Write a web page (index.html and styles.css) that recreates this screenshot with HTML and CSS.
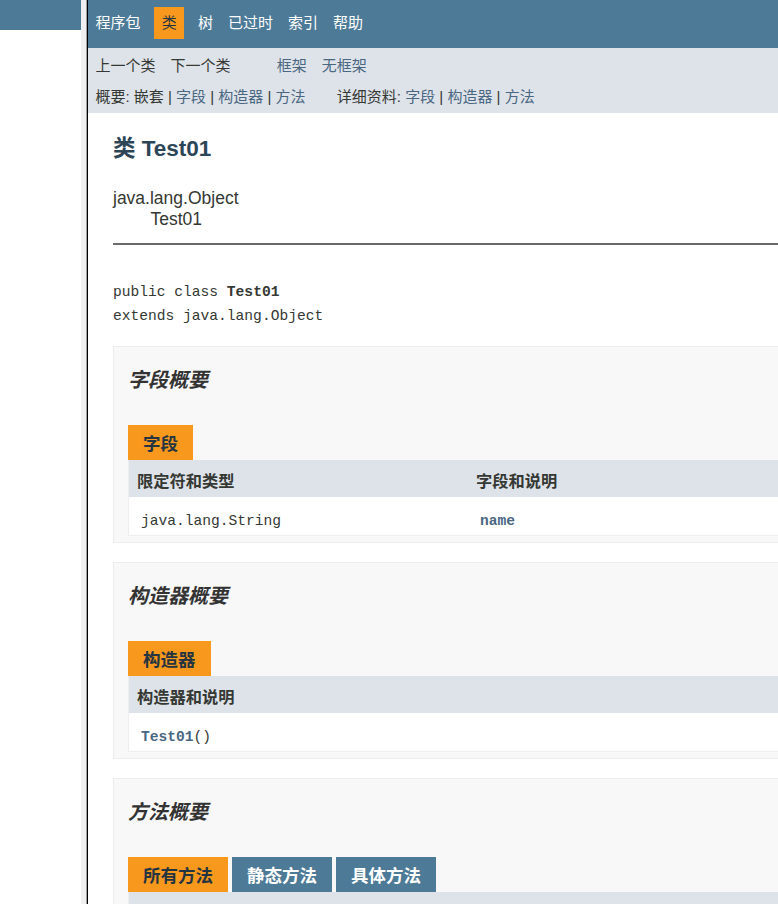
FILE: index.html
```html
<!DOCTYPE html>
<html lang="zh-CN">
<head>
<meta charset="utf-8">
<title>Test01</title>
<link rel="stylesheet" href="styles.css">
</head>
<body>
<div class="frameset">
  <div class="left-frame"><div class="left-bar"></div></div>
  <div class="frame-border"></div>
  <div class="main-frame">
    <nav class="top-nav">
      <ul class="nav-list">
        <li>程序包</li>
        <li class="active">类</li>
        <li>树</li>
        <li>已过时</li>
        <li>索引</li>
        <li>帮助</li>
      </ul>
    </nav>
    <div class="sub-nav">
      <div class="sub-row row1">
        <ul class="nav-list">
          <li>上一个类</li>
          <li>下一个类</li>
        </ul>
        <ul class="nav-list">
          <li><a href="#">框架</a></li>
          <li><a href="#">无框架</a></li>
        </ul>
      </div>
      <div class="sub-row row2">
        <ul class="sub-list">
          <li>概要:&nbsp;嵌套&nbsp;|&nbsp;<a href="#">字段</a>&nbsp;|&nbsp;<a href="#">构造器</a>&nbsp;|&nbsp;<a href="#">方法</a></li>
        </ul>
        <ul class="sub-list">
          <li>详细资料:&nbsp;<a href="#">字段</a>&nbsp;|&nbsp;<a href="#">构造器</a>&nbsp;|&nbsp;<a href="#">方法</a></li>
        </ul>
      </div>
    </div>
    <main class="content">
      <h2 class="title">类 Test01</h2>
      <ul class="inheritance">
        <li>java.lang.Object</li>
        <li class="sub">Test01</li>
      </ul>
      <hr class="divider">
      <pre class="decl">public class <b>Test01</b>
extends java.lang.Object</pre>

      <section class="summary">
        <h3>字段概要</h3>
        <div class="tabs"><span class="tab active">字段</span></div>
        <div class="member-table two-col">
          <div class="th">限定符和类型</div>
          <div class="th">字段和说明</div>
          <div class="td"><code>java.lang.String</code></div>
          <div class="td"><code><a class="member" href="#">name</a></code></div>
        </div>
      </section>

      <section class="summary">
        <h3>构造器概要</h3>
        <div class="tabs"><span class="tab active">构造器</span></div>
        <div class="member-table one-col">
          <div class="th">构造器和说明</div>
          <div class="td"><code><a class="member" href="#">Test01</a>()</code></div>
        </div>
      </section>

      <section class="summary">
        <h3>方法概要</h3>
        <div class="tabs">
          <span class="tab active">所有方法</span>
          <span class="tab">静态方法</span>
          <span class="tab">具体方法</span>
        </div>
        <div class="member-table two-col">
          <div class="th"></div>
          <div class="th"></div>
        </div>
      </section>
    </main>
  </div>
</div>
</body>
</html>
```

FILE: styles.css
```css
* {
  box-sizing: border-box;
}

html,
body {
  margin: 0;
  padding: 0;
}

body {
  width: 778px;
  height: 904px;
  overflow: hidden;
  background: #ffffff;
  color: #353833;
  font-family: "Liberation Sans", "Noto Sans CJK SC", sans-serif;
  font-size: 17.5px;
}

a {
  color: #4a6782;
  text-decoration: none;
}

.frameset {
  display: flex;
  height: 904px;
}

.left-frame {
  flex: none;
  width: 81px;
  background: #ffffff;
}

.left-bar {
  height: 30px;
  background: #4d7a97;
}

.frame-border {
  flex: none;
  width: 7px;
  background: linear-gradient(to right, #f0f0f0 0 5px, #a0a0a0 5px 6px, #000000 6px 7px);
}

.main-frame {
  flex: none;
  width: 920px;
}

/* top navigation */
.nav-list {
  display: flex;
  margin: 0 31.25px 0 0;
  padding: 0;
  list-style: none;
}

.top-nav {
  height: 48px;
  padding-top: 7px;
  background: #4d7a97;
  font-size: 15px;
}

.top-nav li {
  padding: 0 7.5px;
  line-height: 32px;
  color: #ffffff;
}

.top-nav li.active {
  margin: 0 6.25px;
  background: #f8981d;
  color: #253441;
}

/* sub navigation */
.sub-nav {
  height: 65px;
  background: #dee3e9;
  font-size: 15px;
}

.sub-row {
  display: flex;
}

.row1 {
  height: 38px;
  padding-top: 5px;
}

.row1 li {
  padding: 0 7.5px;
  line-height: 26px;
}

.row2 {
  padding-left: 7.5px;
  line-height: 22px;
}

.sub-list {
  margin: 0 31.25px 0 0;
  padding: 0;
  list-style: none;
  white-space: nowrap;
}

/* content */
.content {
  padding: 0 25px;
}

.title {
  margin: 20.5px 0 0;
  font-size: 22.5px;
  line-height: 30px;
  font-weight: bold;
  color: #2c4557;
}

.inheritance {
  margin: 24px 0 0;
  padding: 0;
  list-style: none;
  line-height: 21.5px;
}

.inheritance .sub {
  padding-left: 37.5px;
}

.divider {
  margin: 12.5px 0 0;
  height: 2px;
  border: 0;
  background: #6a6a6a;
}

.decl {
  margin: 35px 0 -1px;
  font-family: "Liberation Mono", "Noto Sans CJK SC", monospace;
  font-size: 14.6px;
  line-height: 24px;
  color: #353833;
}

code {
  font-family: "Liberation Mono", "Noto Sans CJK SC", monospace;
  font-size: 14.6px;
}

.summary {
  margin-top: 19px;
  padding: 0 25px 6px 14px;
  border: 1px solid #ededed;
  background: #f8f8f8;
}

.summary h3 {
  margin: 19px 0 0;
  font-size: 20px;
  line-height: 28px;
  font-style: italic;
  font-weight: bold;
  color: #333333;
}

.tabs {
  display: flex;
  gap: 4px;
  margin-top: 31px;
}

.tab {
  height: 35px;
  padding: 3px 15px 0;
  line-height: 32px;
  font-size: 17.5px;
  font-weight: bold;
  background: #4d7a97;
  color: #ffffff;
}

.tab.active {
  background: #f8981d;
  color: #253441;
}

.member-table {
  display: grid;
  border: 1px solid #eeeeee;
  border-top: 0;
  background: #ffffff;
}

.two-col {
  grid-template-columns: 339px 1fr;
}

.one-col {
  grid-template-columns: 1fr;
}

.th {
  height: 37px;
  padding: 10px 3.75px 4px 8px;
  line-height: 23px;
  font-size: 16.25px;
  font-weight: bold;
  background: #dee3e9;
  color: #353833;
}

.td {
  height: 38px;
  padding: 9px 3.75px 3px 12px;
  line-height: 26px;
  background: #ffffff;
  white-space: nowrap;
}

.member {
  font-weight: bold;
}
```
